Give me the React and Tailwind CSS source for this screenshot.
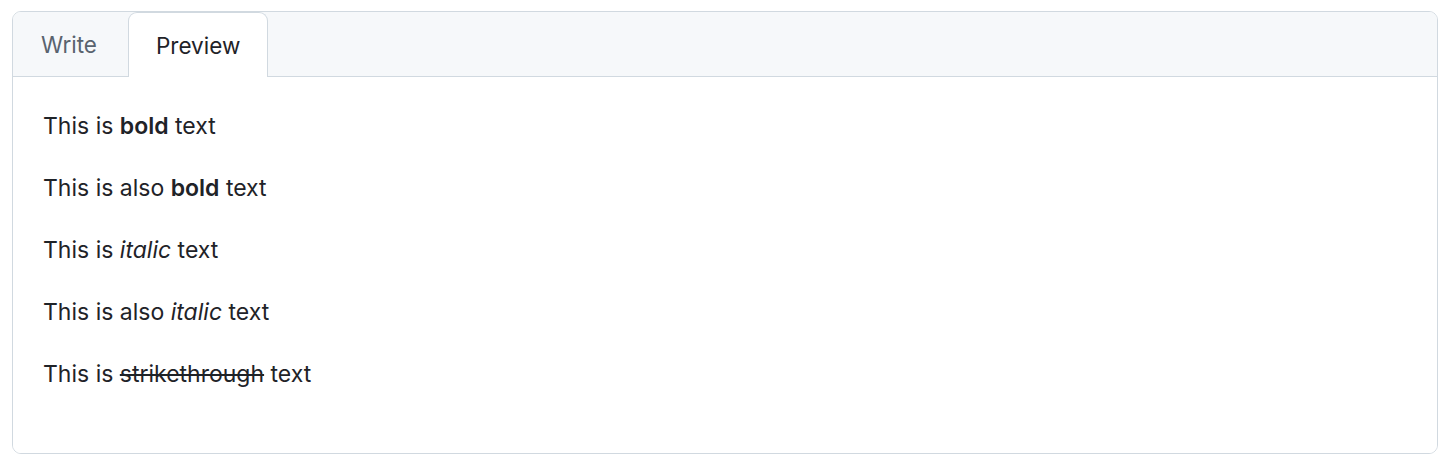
export default function App() {
  return (
    <div className="w-[1456px] h-[473px] bg-white pt-[11px] pl-[12px] pr-[18px] font-['Inter',sans-serif] text-[#1f2328]">
      <div className="h-[443px] border border-[#d1d9e0] rounded-[9px] flex flex-col overflow-hidden">
        <div className="flex h-[65px] bg-[#f6f8fa] border-b border-[#d1d9e0] shrink-0">
          <div className="flex items-center pl-[28px] pr-[31px] text-[22.5px] text-[#59636e] pt-[2px]">Write</div>
          <div className="flex items-center px-[27px] text-[22.5px] text-[#1f2328] bg-white border-x border-t border-[#d1d9e0] rounded-t-[9px] -mb-px pt-[1px]">Preview</div>
        </div>
        <div className="flex-1 bg-white pl-[30px] pt-[31px] text-[23px] leading-[37px]">
          <p className="mb-[25px]">This is <strong className="font-semibold">bold</strong> text</p>
          <p className="mb-[25px]">This is also <strong className="font-semibold">bold</strong> text</p>
          <p className="mb-[25px]">This is <em className="italic">italic</em> text</p>
          <p className="mb-[25px]">This is also <em className="italic">italic</em> text</p>
          <p className="mb-[25px]">This is <del className="line-through">strikethrough</del> text</p>
        </div>
      </div>
    </div>
  );
}
